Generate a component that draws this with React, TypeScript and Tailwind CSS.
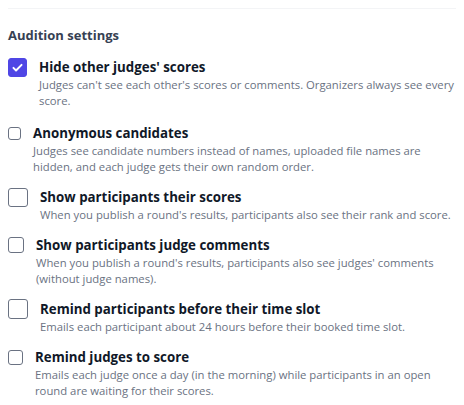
import { useState } from 'react';

type Setting = {
  key: string;
  title: string;
  description: string;
  box: string;
};

const SETTINGS: Setting[] = [
  {
    key: 'hideScores',
    title: "Hide other judges' scores",
    description: "Judges can't see each other's scores or comments. Organizers always see every score.",
    box: 'h-[19px] w-[19px] mt-[1px]',
  },
  {
    key: 'anonymous',
    title: 'Anonymous candidates',
    description:
      'Judges see candidate numbers instead of names, uploaded file names are hidden, and each judge gets their own random order.',
    box: 'h-[13px] w-[13px] mt-[4px]',
  },
  {
    key: 'showScores',
    title: 'Show participants their scores',
    description: "When you publish a round's results, participants also see their rank and score.",
    box: 'h-[19px] w-[20px] mt-[1px]',
  },
  {
    key: 'showComments',
    title: 'Show participants judge comments',
    description: "When you publish a round's results, participants also see judges' comments (without judge names).",
    box: 'h-[16px] w-[16px] mt-[2px]',
  },
  {
    key: 'remindParticipants',
    title: 'Remind participants before their time slot',
    description: 'Emails each participant about 24 hours before their booked time slot.',
    box: 'h-[20px] w-[20px] mt-[0px]',
  },
  {
    key: 'remindJudges',
    title: 'Remind judges to score',
    description:
      'Emails each judge once a day (in the morning) while participants in an open round are waiting for their scores.',
    box: 'h-[15px] w-[15px] mt-[3px]',
  },
];

export default function App() {
  const [checked, setChecked] = useState<Record<string, boolean>>({ hideScores: true });

  return (
    <div className="min-h-screen bg-white px-2 pt-2 font-['Open_Sans',sans-serif]">
      <div className="border-t border-gray-100 pt-4">
        <h2 className="text-[13px] font-bold leading-5 text-gray-700">Audition settings</h2>
        <div className="mt-3 flex flex-col gap-3">
          {SETTINGS.map((s, i) => {
            const on = !!checked[s.key];
            return (
              <label key={s.key} className={`flex cursor-pointer items-start gap-3 ${i === 0 ? 'pb-[2px]' : ''}`}>
                <span
                  className={`${s.box} flex shrink-0 items-center justify-center rounded-[3px] border ${
                    on ? 'border-[#4f46e5] bg-[#4f46e5]' : 'border-gray-500 bg-white'
                  }`}
                >
                  {on && (
                    <svg viewBox="0 0 16 16" className="h-[13px] w-[13px]" fill="none">
                      <path d="M3 8.5l3.2 3.2L13 4.8" stroke="white" strokeWidth="2.4" strokeLinecap="round" strokeLinejoin="round" />
                    </svg>
                  )}
                </span>
                <input
                  type="checkbox"
                  className="sr-only"
                  checked={on}
                  onChange={() => setChecked((c) => ({ ...c, [s.key]: !c[s.key] }))}
                />
                <span className="min-w-0 flex-1">
                  <span className="block text-[13.3px] font-bold leading-5 text-gray-900">{s.title}</span>
                  <span className="block max-w-[418px] text-[11.3px] leading-4 text-gray-500">{s.description}</span>
                </span>
              </label>
            );
          })}
        </div>
      </div>
    </div>
  );
}
